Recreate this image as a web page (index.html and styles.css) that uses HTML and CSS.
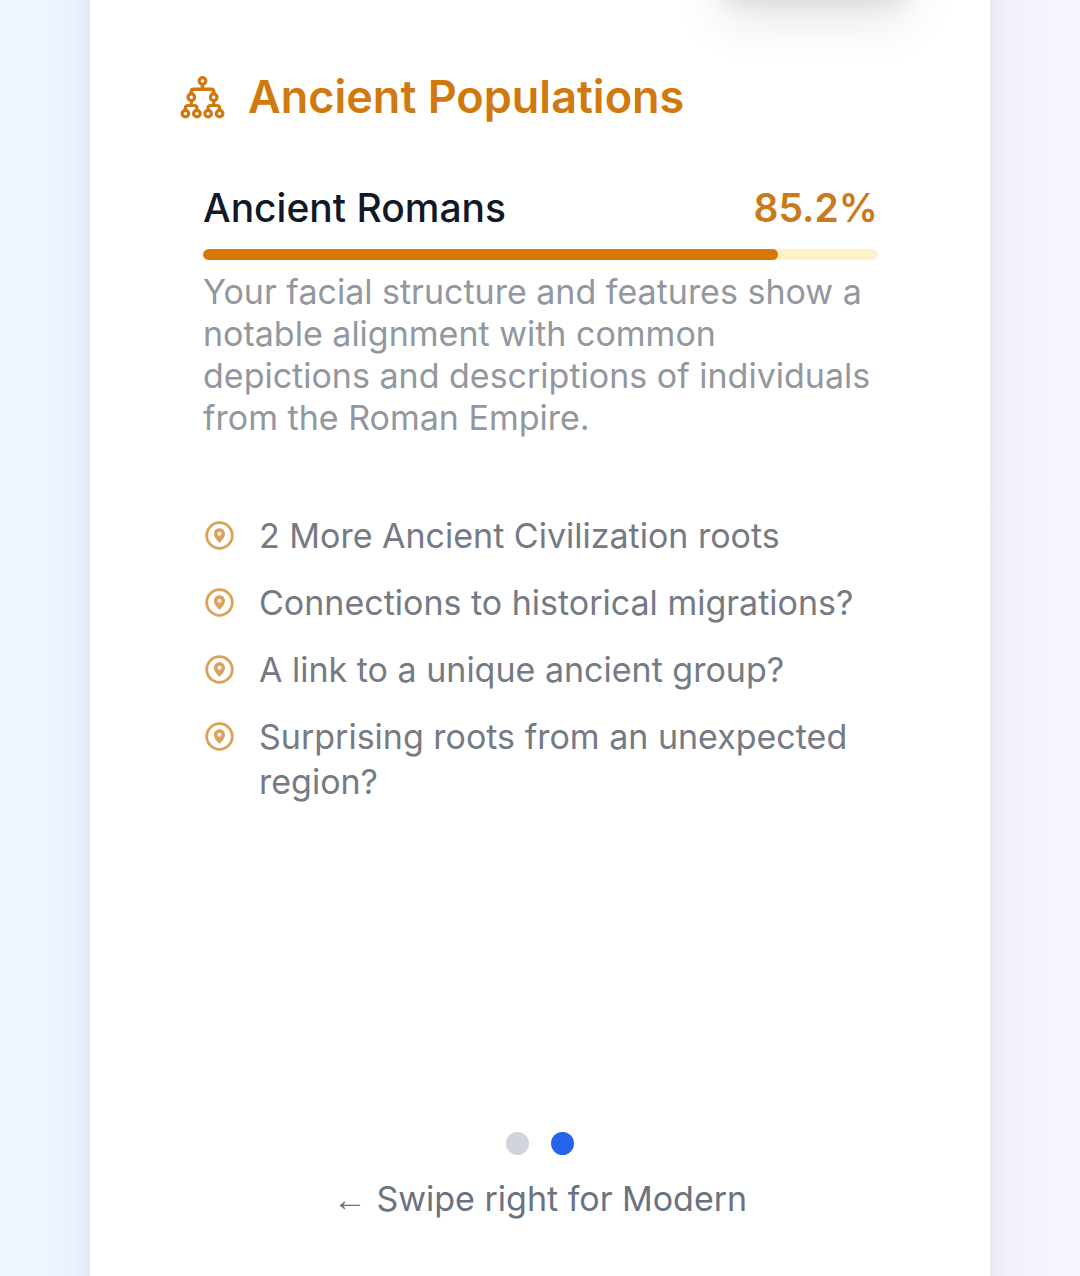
FILE: index.html
```html
<!DOCTYPE html>
<html lang="en">

<head>
    <meta charset="UTF-8">
    <meta name="viewport" content="width=device-width, initial-scale=1.0">
    <title>Ancient Populations</title>
    <link rel="stylesheet" href="styles.css">
</head>

<body>
    <!-- shared icon for the list rows -->
    <svg class="sprite" aria-hidden="true">
        <symbol id="pin" viewBox="0 0 34 34">
            <circle cx="16.5" cy="17" r="12.8" fill="none" stroke="currentColor" stroke-width="2.8" />
            <path fill="currentColor" fill-rule="evenodd" d="M16.5 9.8c-3.2 0-5.5 2.4-5.5 5.4 0 3.8 3.3 6.6 5.5 9.4 2.2-2.8 5.5-5.6 5.5-9.4 0-3-2.3-5.4-5.5-5.4zm0 3.4a2 2 0 1 1 0 4 2 2 0 0 1 0-4z" />
        </symbol>
    </svg>

    <main class="card">
        <div class="card-edge"></div>

        <section class="populations">
            <h2 class="title">
                <svg class="title-icon" viewBox="0 0 45 45" fill="none" stroke="currentColor" stroke-width="3.2" aria-hidden="true">
                    <circle cx="22.5" cy="6" r="3.3" />
                    <circle cx="11.3" cy="22.2" r="3.3" />
                    <circle cx="33.7" cy="22.2" r="3.3" />
                    <circle cx="5.4" cy="38.6" r="3.3" />
                    <circle cx="16.9" cy="38.6" r="3.3" />
                    <circle cx="28.1" cy="38.6" r="3.3" />
                    <circle cx="39.6" cy="38.6" r="3.3" />
                    <path stroke-width="3.6" d="M22.5 9.3v4.9M11.3 18.9v-2.2q0-2.5 2.5-2.5h17.4q2.5 0 2.5 2.5v2.2" />
                    <path d="M11.3 25.5v5M5.4 35.3v-2.3q0-2.5 2.5-2.5h6.5q2.5 0 2.5 2.5v2.3M33.7 25.5v5M28.1 35.3v-2.3q0-2.5 2.5-2.5h6.5q2.5 0 2.5 2.5v2.3" />
                </svg>
                Ancient Populations
            </h2>

            <div class="content">
                <div class="result-row">
                    <h3 class="name">Ancient Romans</h3>
                    <span class="percent">85.2%</span>
                </div>
                <div class="bar">
                    <div class="bar-fill" style="width: 85.2%"></div>
                </div>
                <p class="description">Your facial structure and features show a notable alignment with common depictions and descriptions of individuals from the Roman Empire.</p>

                <ul class="hints">
                    <li><svg class="pin" aria-hidden="true"><use href="#pin" /></svg><span>2 More Ancient Civilization roots</span></li>
                    <li><svg class="pin" aria-hidden="true"><use href="#pin" /></svg><span>Connections to historical migrations?</span></li>
                    <li><svg class="pin" aria-hidden="true"><use href="#pin" /></svg><span>A link to a unique ancient group?</span></li>
                    <li><svg class="pin" aria-hidden="true"><use href="#pin" /></svg><span>Surprising roots from an unexpected region?</span></li>
                </ul>
            </div>
        </section>

        <footer class="pager">
            <div class="dots">
                <button class="dot" type="button" aria-label="Modern"></button>
                <button class="dot active" type="button" aria-label="Ancient"></button>
            </div>
            <p class="swipe"><span class="arrow">←</span> Swipe right for Modern</p>
        </footer>
    </main>
</body>

</html>
```
FILE: styles.css
```css
* {
    margin: 0;
    padding: 0;
    box-sizing: border-box;
}

body {
    min-height: 100vh;
    padding: 0 90px;
    display: flex;
    font-family: Inter, sans-serif;
    background: linear-gradient(90deg, #eff6ff, #f5f5ff);
}

.sprite {
    position: absolute;
    width: 0;
    height: 0;
}

.card {
    position: relative;
    isolation: isolate;
    flex: 1;
    min-width: 0;
    display: flex;
    flex-direction: column;
    padding: 67px 90px 55px;
    background: #fff;
    overflow-x: visible;
    overflow-y: clip;
}

/* side shadow, runs past both ends so it stays even */
.card::before {
    content: "";
    position: absolute;
    inset: -90px 0;
    z-index: -1;
    box-shadow: 0 0 70px -8px rgba(0, 0, 0, 0.08), 0 0 28px -6px rgba(0, 0, 0, 0.05);
}

/* raised panel that sits just above the section */
.card-edge {
    position: absolute;
    right: 74px;
    bottom: 100%;
    width: 202px;
    height: 90px;
    box-shadow: 0 28px 50px -8px rgba(0, 0, 0, 0.1), 0 11px 22px -11px rgba(0, 0, 0, 0.1);
}

.populations {
    flex: 1;
}

.title {
    display: flex;
    align-items: center;
    gap: 23px;
    color: #d0790f;
    font-size: 45px;
    font-weight: 600;
    line-height: 60px;
}

.title-icon {
    flex: none;
    width: 45px;
    height: 45px;
}

.content {
    padding: 53px 22px 0 23px;
}

.result-row {
    display: flex;
    justify-content: space-between;
    align-items: center;
    line-height: 56px;
    margin-bottom: 13px;
}

.name {
    color: #111827;
    font-size: 39px;
    font-weight: 500;
}

.percent {
    color: #cb7a1b;
    font-size: 39px;
    font-weight: 600;
}

.bar {
    height: 11px;
    overflow: hidden;
    border-radius: 6px;
    background: #fdf1c8;
}

.bar-fill {
    height: 100%;
    border-radius: 6px;
    background: #d97706;
}

.description {
    margin-top: 11px;
    color: #9297a0;
    font-size: 34px;
    line-height: 42px;
}

.hints {
    display: flex;
    flex-direction: column;
    gap: 22px;
    margin-top: 74px;
    list-style: none;
    color: #757a84;
    font-size: 34px;
    line-height: 45px;
}

.hints li {
    display: flex;
    align-items: flex-start;
    gap: 22px;
}

.pin {
    flex: none;
    width: 34px;
    height: 45px;
    color: #dba25c;
}

.pager {
    text-align: center;
}

.dots {
    display: flex;
    justify-content: center;
    gap: 22px;
    margin-bottom: 21px;
}

.dot {
    width: 23px;
    height: 23px;
    border: none;
    border-radius: 50%;
    background: #d1d5db;
    cursor: pointer;
}

.dot.active {
    background: #2563eb;
}

.swipe {
    color: #6b7280;
    font-size: 34px;
    line-height: 45px;
}

.arrow {
    font-family: "Liberation Serif", serif;
    line-height: 1;
}

@media (max-width: 700px) {
    body {
        padding: 0 16px;
    }

    .card {
        padding-left: 24px;
        padding-right: 24px;
    }

    .title {
        font-size: 32px;
    }
}
```
